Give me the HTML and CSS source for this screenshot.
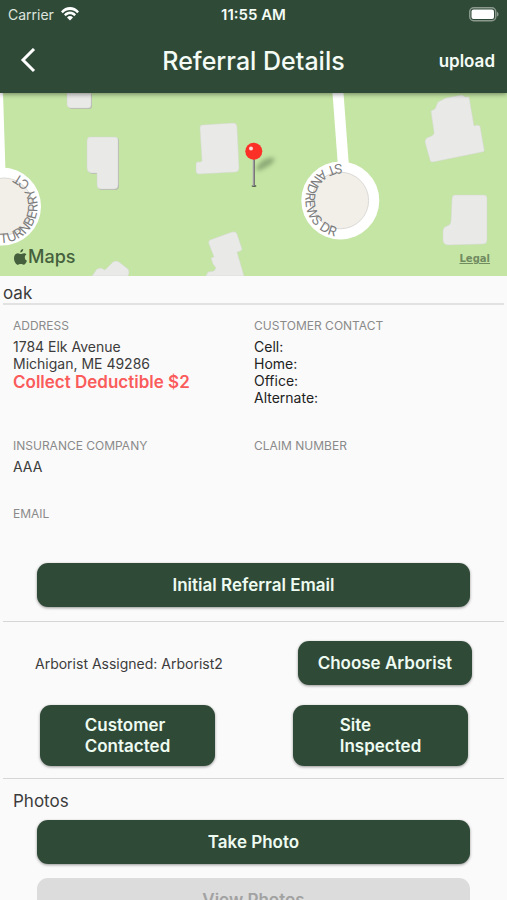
FILE: index.html
```html
<!DOCTYPE html>
<html lang="en">
<head>
<meta charset="utf-8">
<meta name="viewport" content="width=device-width, initial-scale=1">
<title>Referral Details</title>
<link rel="stylesheet" href="styles.css">
</head>
<body>
<div class="app">
  <header class="header">
    <div class="status">
      <div class="carrier">
        <span>Carrier</span>
        <svg class="wifi" viewBox="0 0 18 14" aria-hidden="true">
          <path d="M0 4.4C5-1.4 13-1.4 18 4.4L16.200 6.200C12.200 1.800 5.800 1.800 1.800 6.200Z"/>
          <path d="M3 7.400C6.400 3.600 11.600 3.600 15 7.400L13.200 9.200C10.600 6.600 7.400 6.600 4.800 9.200Z"/>
          <path d="M6 10.400C7.800 8.600 10.200 8.600 12 10.400L9 13.500Z"/>
        </svg>
      </div>
      <span class="clock">11:55 AM</span>
      <svg class="battery" viewBox="0 0 30 15" aria-hidden="true">
        <rect class="battery-case" x=".75" y=".75" width="26" height="13" rx="4"/>
        <rect class="battery-fill" x="2.500" y="2.500" width="22.500" height="9.500" rx="2"/>
        <path class="battery-tip" d="M28 5v4.500c2-.6 2-3.900 0-4.500z"/>
      </svg>
    </div>
    <div class="bar">
      <button class="back" type="button" aria-label="Back">
        <svg viewBox="0 0 16 26" aria-hidden="true"><path d="M14 1L3 12l11 11"/></svg>
      </button>
      <h1 class="title">Referral Details</h1>
      <button class="upload" type="button">upload</button>
    </div>
  </header>

  <main class="content">
    <div class="map">
      <svg class="map-art" viewBox="0 0 507 183" preserveAspectRatio="xMidYMid slice" role="img" aria-label="Map of the property">
        <defs>
          <path id="turnberry-label" d="M0 150A36.500 36.500 0 1 0 2 77"/>
          <path id="andrews-label" d="M342 71A36.500 36.500 0 0 0 342 144"/>
          <filter id="soft" x="-50%" y="-50%" width="200%" height="200%"><feGaussianBlur stdDeviation="2"/></filter>
          <linearGradient id="pole"><stop offset="0" stop-color="#bbb"/><stop offset="1" stop-color="#666"/></linearGradient>
        </defs>
        <rect width="507" height="183" fill="#c4e5a4"/>
        <g class="road">
          <circle cx="2" cy="113.500" r="39"/>
          <path d="M-6 0H3L5.500 80H-6z"/>
          <circle cx="340.300" cy="107.500" r="39"/>
          <path d="M332.500 0h11l5.500 74h-11z"/>
        </g>
        <g class="island">
          <circle cx="4" cy="113.500" r="28.500"/>
          <circle cx="340.300" cy="107.500" r="28.300"/>
        </g>
        <g class="building-shade" transform="translate(1 1)">
          <path d="M67 0h24v12q0 3-3 3H70q-2 0-3-3z"/>
          <path d="M90 44h25q3 0 3 3v45q0 4-4 4h-13q-4 0-4-4V80h-6q-4-1-4-5V48q0-4 3-4z"/>
        </g>
        <g class="building">
          <path d="M67 0h24v12q0 3-3 3H70q-2 0-3-3z"/>
          <path d="M90 44h25q3 0 3 3v45q0 4-4 4h-13q-4 0-4-4V80h-6q-4-1-4-5V48q0-4 3-4z"/>
          <path d="M202 32l31-2q4 0 4 4l2 41q0 3-3 4l-37 2q-3 0-3-3v-7q0-3 4-2l2-1-2-33q0-3 2-3z"/>
          <path d="M210 147l22-8q4-1 5 2l5 15q0 2-5 3l7 24h-38l2-4 6-1 2-3-3-4-2-6 3-1-5-13q-1-3 1-4z"/>
          <path d="M92 183l5-7 4-1 4 2 8-8q3-2 6 0l9 7q2 3 0 7z"/>
          <path d="M438 9l8-4 16-3 3 2h4l5 29 3-1 3 1 4 23q1 3-2 3l-49 10q-3 0-3-2l-5-18q0-4 4-5 6-2 5-5l-3-21 4-2z"/>
          <path d="M455 102h29q3 0 3 3v42q0 4-4 4l-34 1q-6 0-6-5v-9q0-4 4-5 4-1 4-5l1-22q0-4 3-4z"/>
        </g>
        <g class="street">
          <text><textPath href="#turnberry-label">TURNBERRY CT</textPath></text>
          <text><textPath href="#andrews-label">ST ANDREWS DR</textPath></text>
        </g>
        <g class="pin">
          <path d="M256 76c4-8 10-12 18-11 2 4-6 9-16 13z" fill="#56714a" opacity=".5" filter="url(#soft)"/>
          <ellipse cx="254" cy="93" rx="2.500" ry="1" fill="#54614f"/>
          <rect x="252.600" y="65" width="2.400" height="28" fill="url(#pole)"/>
          <circle cx="253.800" cy="58.300" r="8.500" fill="#fb3128"/>
          <circle cx="251" cy="55.500" r="2" fill="#ffdcd8"/>
        </g>
      </svg>
      <div class="map-brand">
        <svg viewBox="0 0 13 16" aria-hidden="true"><path d="M9.200 0c.1 1.900-1.200 3.500-2.900 3.600C6.100 1.800 7.500.2 9.200 0zM12.400 5.600c-2.400 1.600-2 5 .6 6.200-.8 2.200-2.100 4-3.400 4-1.100 0-1.500-.7-2.800-.7s-1.700.7-2.800.7C2.200 15.800 0 12.500 0 9.200 0 5.900 2 4.200 3.900 4.200c1.200 0 2.100.8 2.900.8.700 0 1.800-.8 3.200-.8 1 0 1.900.5 2.400 1.400z"/></svg>
        <span>Maps</span>
      </div>
      <a class="legal" href="#legal">Legal</a>
    </div>

    <h2 class="name">oak</h2>

    <div class="info">
      <section class="field tall">
        <h3>ADDRESS</h3>
        <p>1784 Elk Avenue</p>
        <p>Michigan, ME 49286</p>
        <p class="deductible">Collect Deductible $2</p>
      </section>
      <section class="field dark">
        <h3>CUSTOMER CONTACT</h3>
        <p>Cell:</p>
        <p>Home:</p>
        <p>Office:</p>
        <p>Alternate:</p>
      </section>
      <section class="field">
        <h3>INSURANCE COMPANY</h3>
        <p>AAA</p>
      </section>
      <section class="field">
        <h3>CLAIM NUMBER</h3>
      </section>
      <section class="field">
        <h3>EMAIL</h3>
      </section>
    </div>

    <div class="wide">
      <button class="btn" type="button">Initial Referral Email</button>
    </div>

    <section class="arborist">
      <div class="assign">
        <p>Arborist Assigned: Arborist2</p>
        <button class="btn choose" type="button">Choose Arborist</button>
      </div>
      <div class="steps">
        <button class="btn step" type="button"><span>Customer<br>Contacted</span></button>
        <button class="btn step" type="button"><span>Site<br>Inspected</span></button>
      </div>
    </section>

    <section class="photos">
      <h2>Photos</h2>
      <div class="wide stack">
        <button class="btn" type="button">Take Photo</button>
        <button class="btn" type="button" disabled>View Photos</button>
      </div>
    </section>
  </main>
</div>
</body>
</html>
```
FILE: styles.css
```css
* {
  box-sizing: border-box;
}

body,
h1,
h2,
h3,
p {
  margin: 0;
  font-weight: 400;
}

body {
  background: #fafafa;
  color: #3c3c3c;
  font-family: Inter, "Liberation Sans", sans-serif;
  font-size: 14px;
}

button {
  padding: 0;
  border: 0;
  background: none;
  color: inherit;
  font: inherit;
}

.app {
  display: flex;
  flex-direction: column;
  height: 100vh;
}

.header {
  position: relative;
  z-index: 1;
  flex: none;
  background: #304a38;
  color: #f4fbf5;
  box-shadow: 0 1px 5px rgba(0, 0, 0, 0.45);
}

.status,
.bar {
  display: grid;
  grid-template-columns: 1fr auto 1fr;
  align-items: center;
}

.status {
  height: 28px;
  padding: 0 8px;
}

.carrier {
  display: flex;
  align-items: center;
  gap: 7px;
  color: #dde5de;
}

.wifi {
  width: 18px;
  height: 14px;
  fill: #ffffff;
}

.clock {
  font-size: 15px;
  font-weight: 600;
}

.battery {
  justify-self: end;
  width: 30px;
  height: 15px;
}

.battery-case {
  fill: none;
  stroke: #8b998f;
  stroke-width: 1.5;
}

.battery-fill {
  fill: #ffffff;
}

.battery-tip {
  fill: #8b998f;
}

.bar {
  height: 65px;
  padding: 0 12px;
}

.back {
  justify-self: start;
  height: 26px;
  padding-left: 8px;
}

.back svg {
  display: block;
  width: 16px;
  height: 26px;
  fill: none;
  stroke: #ffffff;
  stroke-width: 3;
}

.title {
  font-size: 25px;
  font-weight: 500;
  line-height: 28px;
}

.upload {
  justify-self: end;
  font-size: 17px;
  font-weight: 600;
  line-height: 24px;
}

.content {
  flex: 1;
  min-height: 0;
  overflow-y: auto;
  scrollbar-width: none;
}

.map {
  position: relative;
}

.map-art {
  display: block;
  width: 100%;
  height: 183px;
}

.road {
  fill: #ffffff;
}

.island {
  fill: #f2efe9;
  stroke: #dcdad6;
}

.building {
  fill: #e9e9e8;
  stroke: #d5d9d0;
  stroke-width: 0.5;
}

.building-shade {
  fill: #b5b8ae;
}

.street {
  fill: #7c7c7c;
  font-size: 13px;
}

.map-brand {
  position: absolute;
  bottom: 8px;
  left: 14px;
  display: flex;
  align-items: center;
  gap: 1px;
  color: #45603c;
  font-size: 18px;
  font-weight: 500;
  line-height: 22px;
}

.map-brand svg {
  width: 13px;
  height: 16px;
  fill: currentColor;
}

.legal {
  position: absolute;
  right: 17px;
  bottom: 10px;
  color: #718b61;
  font-family: "DejaVu Sans", sans-serif;
  font-size: 10px;
  font-weight: 700;
  line-height: 14px;
}

.name {
  margin: 0 3px;
  padding-top: 7px;
  border-bottom: 2px solid #e2e2e2;
  font-size: 17px;
  line-height: 20px;
}

.info {
  display: grid;
  grid-template-columns: 1fr 1fr;
  row-gap: 30px;
  padding: 12px 0 0 13px;
}

.info .field:nth-child(even) {
  margin-left: -6px;
}

.field h3 {
  margin-bottom: 4px;
  color: #8a8a8a;
  font-size: 12px;
  line-height: 17px;
}

.field p {
  line-height: 17px;
}

.tall {
  min-height: 90px;
}

.dark {
  color: #222222;
}

.field .deductible {
  color: #fa5c5c;
  font-size: 17px;
  font-weight: 600;
  line-height: 20px;
}

.wide {
  display: grid;
  padding: 37px 37px 14px;
}

.btn {
  min-height: 44px;
  border-radius: 11px;
  background: #304a38;
  color: #eefbf1;
  font-size: 17px;
  font-weight: 600;
  line-height: 21px;
  box-shadow: 0 1px 3px rgba(0, 0, 0, 0.4);
}

.btn:disabled {
  background: #dcdcdc;
  color: #a2a2a2;
  box-shadow: none;
}

.arborist {
  margin: 0 3px;
  padding: 19px 32px 12px;
  border-top: 1px solid #d6d6d6;
  border-bottom: 1px solid #d6d6d6;
}

.assign,
.steps {
  display: flex;
  align-items: center;
  justify-content: space-between;
}

.choose {
  padding: 0 20px;
}

.steps {
  padding: 20px 4px 0 5px;
}

.step {
  width: 175px;
  min-height: 61px;
}

.step span {
  display: inline-block;
  text-align: left;
}

.photos h2 {
  padding: 12px 13px 8px;
  font-size: 17px;
  line-height: 21px;
}

.stack {
  row-gap: 14px;
  padding-top: 0;
}
```
